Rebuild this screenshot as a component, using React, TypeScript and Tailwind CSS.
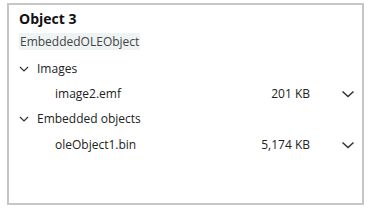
import React from "react";

function SmallChevron() {
  return (
    <svg className="text-[#333]" width="10" height="10" viewBox="0 0 10 10" fill="none">
      <path d="M1 3 L5 7 L9 3" stroke="currentColor" strokeWidth="1.2" />
    </svg>
  );
}

function BigChevron() {
  return (
    <svg className="text-[#333] ml-[31px]" width="14" height="12" viewBox="0 0 14 12" fill="none">
      <path d="M1.5 3.5 L7 8.5 L12.5 3.5" stroke="currentColor" strokeWidth="1.5" />
    </svg>
  );
}

function FileRow({ name, size, h }: { name: string; size: string; h: string }) {
  return (
    <div className={"flex items-center whitespace-nowrap " + h}>
      <span className="pl-[36px] w-[235px]">{name}</span>
      <span className="w-[56px] text-right">{size}</span>
      <BigChevron />
    </div>
  );
}

export default function App() {
  return (
    <div className="w-[371px] h-[209px] bg-white pt-[3px] pl-[7px]" style={{ fontFamily: '"Open Sans", "Noto Sans", sans-serif' }}>
      <div className="w-[357px] h-[202px] border-2 border-[#c6c6c6] pl-[10px] pt-[4px] text-[12px] text-[#222]">
        <div className="text-[14px] font-bold leading-[20px] text-[#111]">Object 3</div>
        <div className="mt-[4px] inline-block bg-[#eef3f4] px-[1px] leading-[17px] text-[#444]">EmbeddedOLEObject</div>
        <div className="mt-[5px] flex items-center h-[25px]">
          <SmallChevron />
          <span className="ml-[8px]">Images</span>
        </div>
        <FileRow name="image2.emf" size="201 KB" h="h-[25px]" />
        <div className="flex items-center h-[25px]">
          <SmallChevron />
          <span className="ml-[8px]">Embedded objects</span>
        </div>
        <FileRow name="oleObject1.bin" size="5,174 KB" h="h-[27px]" />
      </div>
    </div>
  );
}
